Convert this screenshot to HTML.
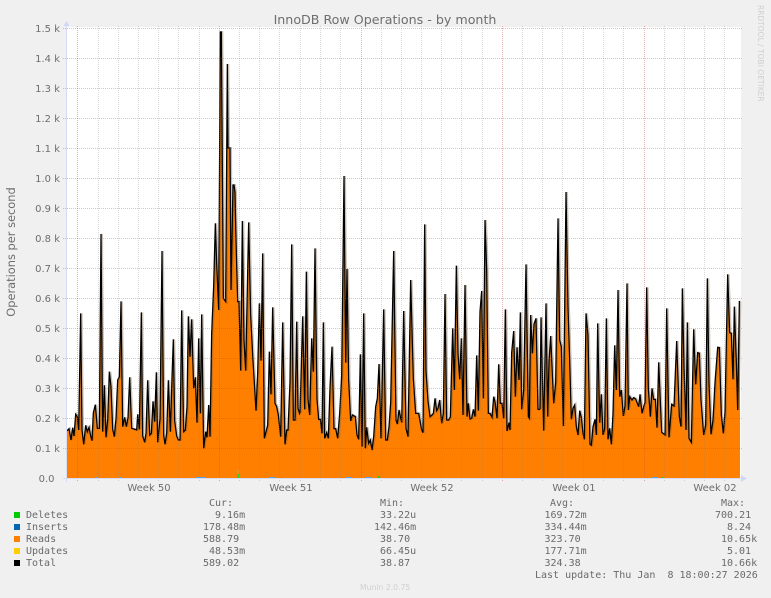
<!DOCTYPE html>
<html>
<head>
<meta charset="utf-8">
<style>
html,body{margin:0;padding:0;background:#f0f0f0;width:771px;height:598px;overflow:hidden}
svg{display:block}
text{font-family:"DejaVu Sans","Liberation Sans",sans-serif;fill:#6e6e6e;white-space:pre}
.y{font-size:10px;text-anchor:end}
.w{font-size:10px;text-anchor:middle}
.m{font-family:"DejaVu Sans Mono","Liberation Mono",monospace;font-size:10px;fill:#6a6a6a}
</style>
</head>
<body>
<svg width="771" height="598" viewBox="0 0 771 598" xmlns="http://www.w3.org/2000/svg">
<defs>
<path id="a" d="M21,692 27,686 33,720 38,683 42,708 47,643 52,650 56,690 62,340 66,690 71,733 77,676 82,695 87,682 92,708 96,722 100,638 106,614 112,685 118,685 123,102 128,695 133,556 138,712 143,660 148,515 153,560 158,688 163,710 168,655 173,540 178,530 183,304 188,680 194,652 199,680 204,652 209,532 215,685 225,688 230,690 233,643 238,688 244,337 248,708 254,727 258,700 263,541 269,705 274,700 279,604 284,665 289,517 293,727 300,657 306,153 311,705 315,733 320,700 325,541 331,695 336,533 340,418 344,663 350,708 355,720 360,720 365,331 371,695 376,690 381,620 385,349 390,470 395,358 401,565 406,532 411,668 416,415 421,640 425,343 431,745 437,695 441,712 446,615 450,710 455,400 461,257 466,70 470,190 476,330 481,-504 484,-504 490,295 497,305 502,-408 504,-156 510,-156 513,270 519,-45 522,-45 525,-24 528,120 533,305 537,305 542,512 547,63 552,420 557,512 566,67 572,345 578,465 588,632 593,520 598,310 603,482 608,160 613,715 618,695 623,676 628,455 633,583 638,322 645,610 650,620 655,645 662,710 668,367 675,733 680,690 684,690 690,545 695,133 700,660 705,660 710,365 714,625 720,645"/>
<path id="b" d="M0,640 8,349 14,628 19,215 24,598 29,645 35,415 40,515 45,145 51,598 56,658 61,658 66,700 70,367 74,715 80,698 85,715 90,562 96,440 102,686 107,686 113,715 119,640 125,528 132,-72 137,488 141,207 146,540 152,663 157,645 166,650 171,705 176,718 181,463 186,740 191,340 196,745 200,682 206,730 211,720 216,750 221,710 227,620 232,595 237,492 243,715 251,328 257,720 262,720 267,680 272,608 281,153 288,660 292,672 297,630 305,668 311,333 318,685 324,710 332,240 340,536 347,640 356,640 365,690 369,698 374,73 378,512 384,603 390,650 396,645 400,640 405,595 410,632 414,625 419,600 425,670 430,640 435,282 440,660 446,660 451,650 458,385 463,570 469,197 474,460 479,538 484,415 489,645 495,255 501,650 505,610 510,657 515,655 520,628 525,650 530,466 535,632 540,335 545,273 550,595 555,60 560,210 565,640 570,640 576,652 581,590 585,605 591,655 596,493 601,610 606,610 611,655 616,328 621,693 627,668 630,690 635,458 641,393 646,590 651,442 657,540 661,337 665,628 671,570 678,193 685,650 688,655 692,345 697,460 702,372 708,355 714,628 720,628"/>
<path id="c" d="M27,628 30,352 38,692 45,310 50,650 54,485 59,408 68,610 74,548 81,55 86,420 91,440 97,678 105,-24 111,322 116,480 121,658 126,625 131,615 136,680 141,705 146,632 151,652 156,700 160,718 165,340 171,406 177,733 181,736 186,680 192,658 196,705 200,370 206,668 211,583 216,705 221,685 226,355 231,718 236,685 241,733 246,640 251,436 256,570 261,270 266,590 271,570 277,648 282,618 288,250 292,630 296,590 303,600 308,593 314,597 319,610 323,620 327,583 333,640 338,620 342,607 347,262 352,565 358,650 363,565 368,598 373,598 378,683 383,487 392,697 402,705 407,325 414,712 422,613 429,618 437,423 445,650 450,680 454,265 459,495 465,690 469,367 474,715 481,727 488,388 494,553 500,458 505,460 510,600 518,705 524,675 529,235 534,550 540,703 546,660 552,548 560,442 565,443 571,645 577,700 582,635 590,223 596,398 601,400 606,538 610,320 616,485 620,630 625,305 627,305"/>
</defs>

<rect width="771" height="598" fill="#f0f0f0"/>
<rect x="67" y="27" width="674" height="451" fill="#fff"/>

<!-- data area -->
<g transform="translate(60,200) scale(.33333)">
<path d="M21,834 L21,692 27,686 33,720 38,683 42,708 47,643 52,650 56,690 62,340 66,690 71,733 77,676 82,695 87,682 92,708 96,722 100,638 106,614 112,685 118,685 123,102 128,695 133,556 138,712 143,660 148,515 153,560 158,688 163,710 168,655 173,540 178,530 183,304 188,680 194,652 199,680 204,652 209,532 215,685 225,688 230,690 233,643 238,688 244,337 248,708 254,727 258,700 263,541 269,705 274,700 279,604 284,665 289,517 293,727 300,657 306,153 311,705 315,733 320,700 325,541 331,695 336,533 340,418 344,663 350,708 355,720 360,720 365,331 371,695 376,690 381,620 385,349 390,470 395,358 401,565 406,532 411,668 416,415 421,640 425,343 431,745 437,695 441,712 446,615 450,710 455,400 461,257 466,70 470,190 476,330 481,-504 484,-504 490,295 497,305 502,-408 504,-156 510,-156 513,270 519,-45 522,-45 525,-24 528,120 533,305 537,305 542,512 547,63 552,420 557,512 566,67 572,345 578,465 588,632 593,520 598,310 603,482 608,160 613,715 618,695 623,676 628,455 633,583 638,322 645,610 650,620 655,645 662,710 668,367 675,733 680,690 684,690 690,545 695,133 700,660 705,660 710,365 714,625 720,645 L720,834 Z" fill="#ff8000"/>
<use href="#a" x="3" fill="none" stroke="#7a5a3a" stroke-opacity=".38" stroke-width="6"/>
<use href="#a" fill="none" stroke="#000" stroke-width="3.8"/>
</g>
<g transform="translate(300,200) scale(.33333)">
<path d="M0,834 L0,640 8,349 14,628 19,215 24,598 29,645 35,415 40,515 45,145 51,598 56,658 61,658 66,700 70,367 74,715 80,698 85,715 90,562 96,440 102,686 107,686 113,715 119,640 125,528 132,-72 137,488 141,207 146,540 152,663 157,645 166,650 171,705 176,718 181,463 186,740 191,340 196,745 200,682 206,730 211,720 216,750 221,710 227,620 232,595 237,492 243,715 251,328 257,720 262,720 267,680 272,608 281,153 288,660 292,672 297,630 305,668 311,333 318,685 324,710 332,240 340,536 347,640 356,640 365,690 369,698 374,73 378,512 384,603 390,650 396,645 400,640 405,595 410,632 414,625 419,600 425,670 430,640 435,282 440,660 446,660 451,650 458,385 463,570 469,197 474,460 479,538 484,415 489,645 495,255 501,650 505,610 510,657 515,655 520,628 525,650 530,466 535,632 540,335 545,273 550,595 555,60 560,210 565,640 570,640 576,652 581,590 585,605 591,655 596,493 601,610 606,610 611,655 616,328 621,693 627,668 630,690 635,458 641,393 646,590 651,442 657,540 661,337 665,628 671,570 678,193 685,650 688,655 692,345 697,460 702,372 708,355 714,628 720,628 L720,834 Z" fill="#ff8000"/>
<use href="#b" x="3" fill="none" stroke="#7a5a3a" stroke-opacity=".38" stroke-width="6"/>
<use href="#b" fill="none" stroke="#000" stroke-width="3.8"/>
</g>
<g transform="translate(531,200) scale(.33333)">
<path d="M27,834 L27,628 30,352 38,692 45,310 50,650 54,485 59,408 68,610 74,548 81,55 86,420 91,440 97,678 105,-24 111,322 116,480 121,658 126,625 131,615 136,680 141,705 146,632 151,652 156,700 160,718 165,340 171,406 177,733 181,736 186,680 192,658 196,705 200,370 206,668 211,583 216,705 221,685 226,355 231,718 236,685 241,733 246,640 251,436 256,570 261,270 266,590 271,570 277,648 282,618 288,250 292,630 296,590 303,600 308,593 314,597 319,610 323,620 327,583 333,640 338,620 342,607 347,262 352,565 358,650 363,565 368,598 373,598 378,683 383,487 392,697 402,705 407,325 414,712 422,613 429,618 437,423 445,650 450,680 454,265 459,495 465,690 469,367 474,715 481,727 488,388 494,553 500,458 505,460 510,600 518,705 524,675 529,235 534,550 540,703 546,660 552,548 560,442 565,443 571,645 577,700 582,635 590,223 596,398 601,400 606,538 610,320 616,485 620,630 625,305 627,305 L627,834 Z" fill="#ff8000"/>
<use href="#c" x="3" fill="none" stroke="#7a5a3a" stroke-opacity=".38" stroke-width="6"/>
<use href="#c" fill="none" stroke="#000" stroke-width="3.8"/>
</g>

<!-- grid: horizontal -->
<g stroke="#c83c3c" stroke-opacity=".34" stroke-width="1" stroke-dasharray="1 1" shape-rendering="crispEdges">
<path d="M63 28.5H743M63 58.5H743M63 88.5H743M63 118.5H743M63 148.5H743M63 178.5H743M63 208.5H743M63 238.5H743M63 268.5H743M63 298.5H743M63 328.5H743M63 358.5H743M63 388.5H743M63 418.5H743M63 448.5H743"/>
</g>
<!-- grid: vertical minor -->
<g stroke="#808080" stroke-opacity=".3" stroke-width="1" stroke-dasharray="1 1" shape-rendering="crispEdges">
<path d="M98.5 26V481M118.5 26V481M138.5 26V481M158.5 26V481M178.5 26V481M199.5 26V481M239.5 26V481M259.5 26V481M279.5 26V481M300.5 26V481M320.5 26V481M340.5 26V481M381.5 26V481M401.5 26V481M421.5 26V481M441.5 26V481M461.5 26V481M482.5 26V481M522.5 26V481M542.5 26V481M562.5 26V481M583.5 26V481M603.5 26V481M623.5 26V481M664.5 26V481M684.5 26V481M704.5 26V481M724.5 26V481"/>
</g>
<!-- grid: vertical major -->
<g stroke="#c83c3c" stroke-opacity=".4" stroke-width="1" stroke-dasharray="1 1" shape-rendering="crispEdges">
<path d="M77.5 26V482M219.5 26V482M361.5 26V482M502.5 26V482M644.5 26V482"/>
</g>

<!-- small series specks on baseline -->
<rect x="237" y="474" width="2" height="4" fill="#33cc33"/>
<rect x="237" y="470" width="2" height="4" fill="#cfa030" opacity=".7"/>
<rect x="378" y="476" width="2" height="2" fill="#22cc22"/>
<rect x="661" y="477" width="2" height="1" fill="#22cc22"/>
<g fill="#5aa0e0">
<rect x="96" y="477" width="2" height="1"/><rect x="120" y="477" width="2" height="1"/><rect x="196" y="477" width="10" height="1"/><rect x="270" y="477" width="6" height="1"/><rect x="345" y="477" width="6" height="1"/><rect x="366" y="477" width="6" height="1"/><rect x="652" y="477" width="6" height="1"/>
</g>

<!-- axes -->
<path d="M66.5 25V482M63 478.5H743" stroke="#d6dcf6" stroke-width="1" fill="none" shape-rendering="crispEdges"/>
<path d="M63.5 26L66.5 21L69.5 26Z" fill="#d0d8f8"/>
<path d="M741 475L747 478.5L741 482Z" fill="#d0d8f8"/>

<!-- title -->
<text x="385" y="24" text-anchor="middle" style="font-size:12.65px">InnoDB Row Operations - by month</text>
<text transform="translate(758,5) rotate(90)" style="font-size:7.5px;fill:#cfcfcf">RRDTOOL / TOBI OETIKER</text>
<text transform="translate(15,252) rotate(-90)" text-anchor="middle" style="font-size:11.4px">Operations per second</text>

<!-- y labels -->
<text class="y" x="60" y="32">1.5 k</text>
<text class="y" x="60" y="62">1.4 k</text>
<text class="y" x="60" y="92">1.3 k</text>
<text class="y" x="60" y="122">1.2 k</text>
<text class="y" x="60" y="152">1.1 k</text>
<text class="y" x="60" y="182">1.0 k</text>
<text class="y" x="60" y="212">0.9 k</text>
<text class="y" x="60" y="242">0.8 k</text>
<text class="y" x="60" y="272">0.7 k</text>
<text class="y" x="60" y="302">0.6 k</text>
<text class="y" x="60" y="332">0.5 k</text>
<text class="y" x="60" y="362">0.4 k</text>
<text class="y" x="60" y="392">0.3 k</text>
<text class="y" x="60" y="422">0.2 k</text>
<text class="y" x="60" y="452">0.1 k</text>
<text class="y" x="54.500" y="482">0.0</text>

<!-- x labels -->
<text class="w" x="149" y="491">Week 50</text>
<text class="w" x="291" y="491">Week 51</text>
<text class="w" x="432" y="491">Week 52</text>
<text class="w" x="574" y="491">Week 01</text>
<text class="w" x="715" y="491">Week 02</text>

<!-- legend -->
<rect x="14" y="512" width="6" height="6" fill="#00cc00"/>
<rect x="14" y="524" width="6" height="6" fill="#0066b3"/>
<rect x="14" y="536" width="6" height="6" fill="#ff8000"/>
<rect x="14" y="548" width="6" height="6" fill="#ffcc00"/>
<rect x="14" y="560" width="6" height="6" fill="#000"/>

<text class="m" x="26" y="518">Deletes</text>
<text class="m" x="26" y="530">Inserts</text>
<text class="m" x="26" y="542">Reads</text>
<text class="m" x="26" y="554">Updates</text>
<text class="m" x="26" y="566">Total</text>

<text class="m" x="209" y="506">Cur:</text>
<text class="m" x="215" y="518">9.16m</text>
<text class="m" x="203" y="530">178.48m</text>
<text class="m" x="203" y="542">588.79</text>
<text class="m" x="209" y="554">48.53m</text>
<text class="m" x="203" y="566">589.02</text>

<text class="m" x="380" y="506">Min:</text>
<text class="m" x="380" y="518">33.22u</text>
<text class="m" x="374" y="530">142.46m</text>
<text class="m" x="380" y="542">38.70</text>
<text class="m" x="380" y="554">66.45u</text>
<text class="m" x="380" y="566">38.87</text>

<text class="m" x="550" y="506">Avg:</text>
<text class="m" x="544.500" y="518">169.72m</text>
<text class="m" x="544.500" y="530">334.44m</text>
<text class="m" x="544.500" y="542">323.70</text>
<text class="m" x="544.500" y="554">177.71m</text>
<text class="m" x="544.500" y="566">324.38</text>

<text class="m" x="721" y="506">Max:</text>
<text class="m" x="715" y="518">700.21</text>
<text class="m" x="727" y="530">8.24</text>
<text class="m" x="721" y="542">10.65k</text>
<text class="m" x="727" y="554">5.01</text>
<text class="m" x="721" y="566">10.66k</text>

<text class="m" x="535" y="578">Last update: Thu Jan  8 18:00:27 2026</text>
<text x="360" y="590" style="font-size:7.7px;fill:#cfcfcf">Munin 2.0.75</text>
</svg>
</body>
</html>
